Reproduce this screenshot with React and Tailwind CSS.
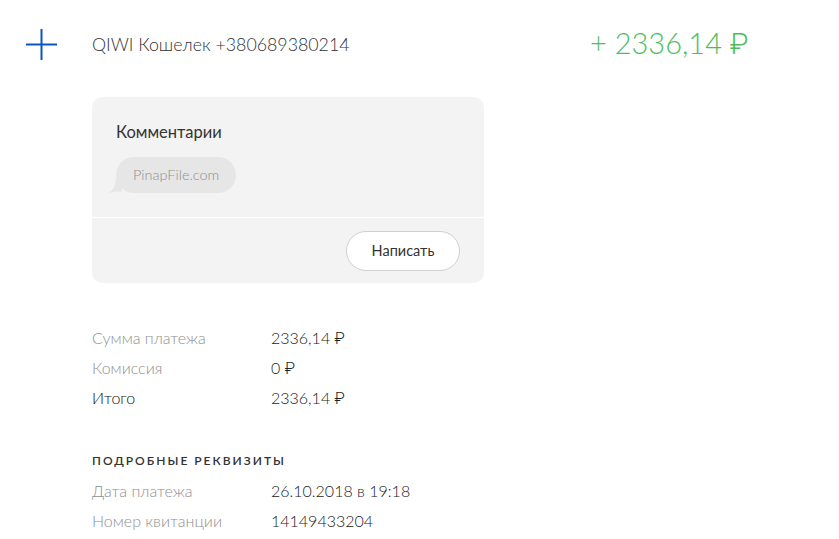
const Rub = () => <span className="font-['Roboto','Noto_Sans',sans-serif] font-light">₽</span>;

const Row = ({ label, value, dark }) => (
  <div className="flex h-[30px] items-center text-[16px] font-light">
    <span className={`w-[179px] ${dark ? 'text-[#111111]' : 'text-[#8f8f8f]'}`}>{label}</span>
    <span className="text-[#222222]">{value}</span>
  </div>
);

export default function App() {
  return (
    <div className="min-h-[539px] w-[839px] bg-white font-['Lato','Open_Sans',sans-serif]">
      <div className="flex h-[88px] items-center pl-[26px]">
        <svg width="31" height="31" viewBox="0 0 31 31" className="flex-none">
          <path d="M15.5 0v31M0 15.5h31" stroke="#0a56bd" strokeWidth="2" />
        </svg>
        <div className="ml-[35px] w-[498px] flex-none text-[17.8px] font-light text-[#333333]">
          QIWI Кошелек +380689380214
        </div>
        <div className="text-[29px] font-light text-[#4dbd5c]">
          + 2336,14 <Rub />
        </div>
      </div>

      <div className="pl-[92px]">
        <div className="mt-[9px] w-[392px] overflow-hidden rounded-[10px] bg-[#f3f3f3]">
          <div className="px-6 pt-[25px] pb-6">
            <div className="text-[16.5px] leading-5 text-[#333333]">Комментарии</div>
            <div className="relative mt-[15px] inline-flex h-9 items-center rounded-full bg-[#e6e6e6] px-[17px] text-[14.5px] font-light text-[#8f8f8f]">
              <svg width="14" height="14" viewBox="0 0 14 14" className="absolute -left-2 bottom-0">
                <path d="M0 14C5 12 7 7 8 0L14 0L14 13C10 12 5 13 0 14Z" fill="#e6e6e6" />
              </svg>
              PinapFile.com
            </div>
          </div>
          <div className="h-px bg-white" />
          <div className="flex justify-end px-6 pt-[13px] pb-3">
            <button className="h-10 w-[114px] rounded-full border border-[#cfcfcf] bg-white text-[14.5px] text-[#333333]">
              Написать
            </button>
          </div>
        </div>

        <div className="mt-10">
          <Row label="Сумма платежа" value={<>2336,14 <Rub /></>} />
          <Row label="Комиссия" value={<>0 <Rub /></>} />
          <Row label="Итого" value={<>2336,14 <Rub /></>} dark />
        </div>

        <div className="mt-[33px] flex h-[30px] items-center text-[12px] font-semibold tracking-[2px] text-[#333333]">
          ПОДРОБНЫЕ РЕКВИЗИТЫ
        </div>
        <Row label="Дата платежа" value="26.10.2018 в 19:18" />
        <Row label="Номер квитанции" value="14149433204" />
      </div>
    </div>
  );
}
